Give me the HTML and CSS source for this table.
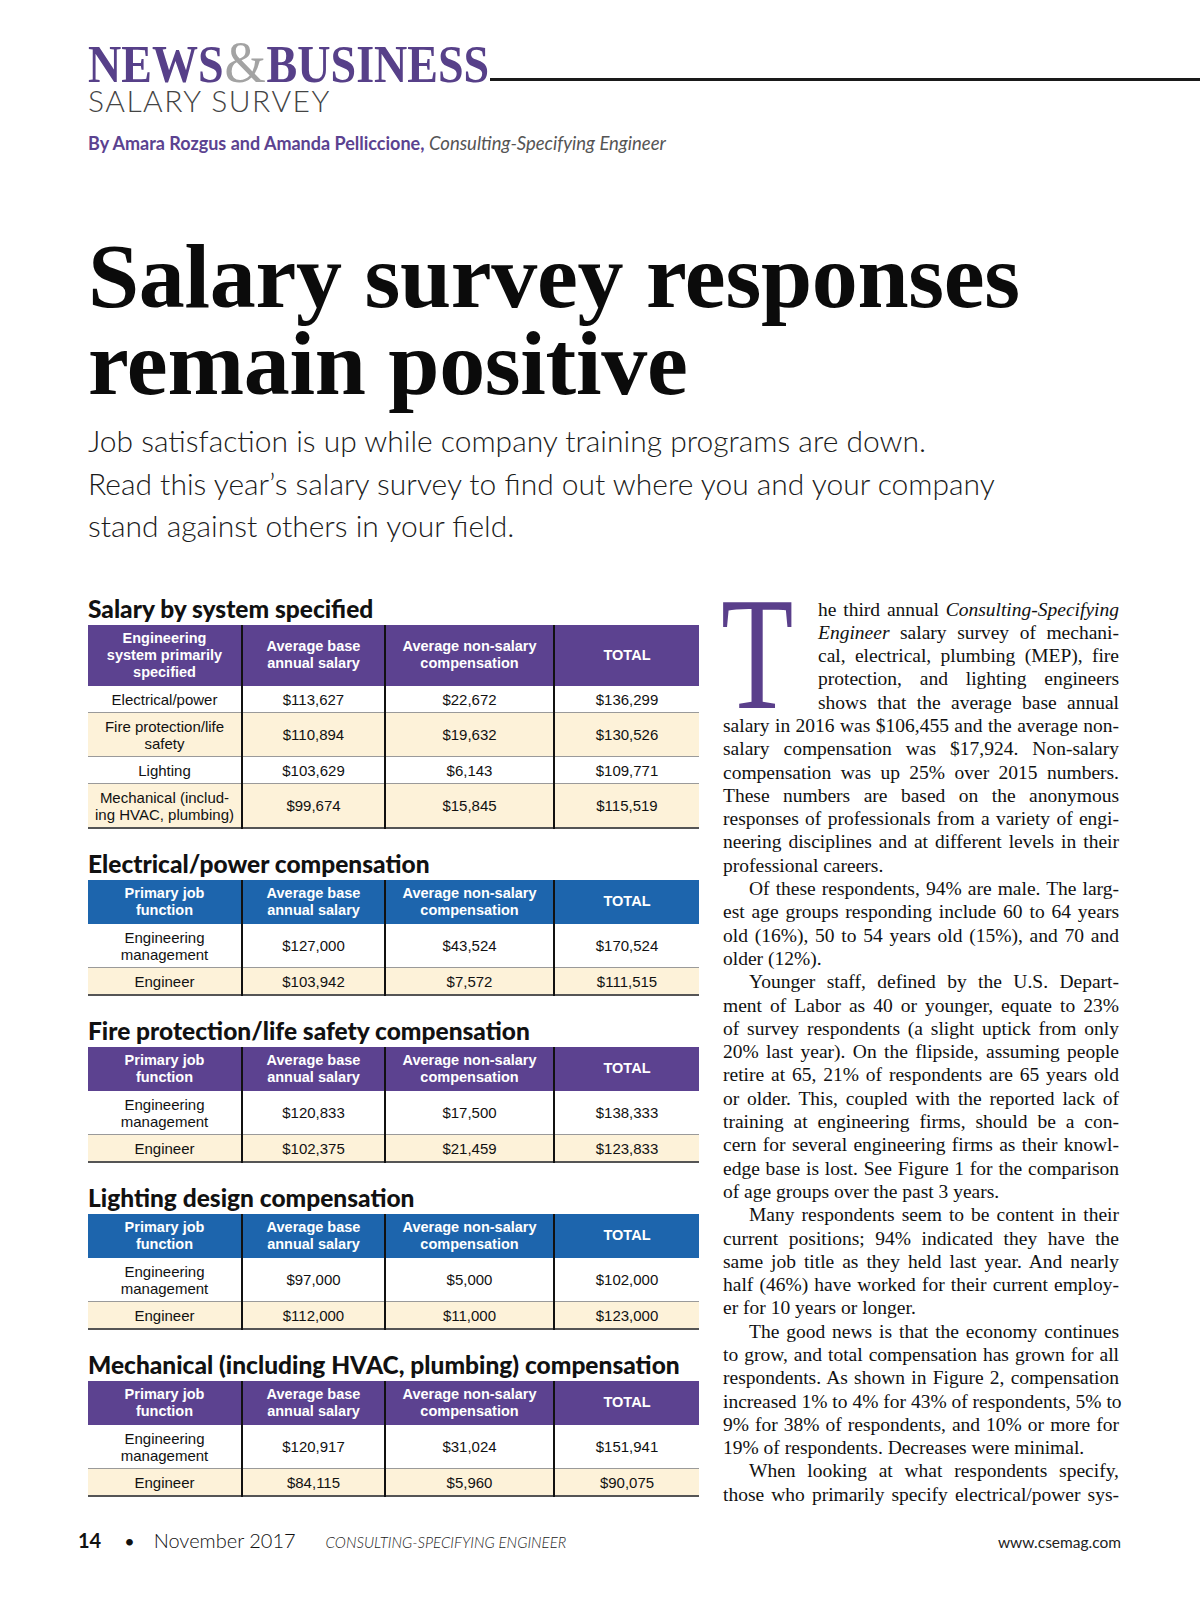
FILE: index.html
```html
<!DOCTYPE html>
<html lang="en">
<head>
<meta charset="utf-8">
<title>Salary survey responses remain positive</title>
<link rel="stylesheet" href="styles.css">
</head>
<body>
<div class="page">
  <header class="top">
    <div class="masthead">
      <div class="mast-word"><span class="mw">NEWS<span class="amp">&amp;</span>BUSINESS</span></div>
      <div class="mast-rule"></div>
    </div>
    <div class="kicker">SALARY SURVEY</div>
    <p class="byline"><b>By Amara Rozgus and Amanda Pelliccione,</b> <i>Consulting-Specifying Engineer</i></p>
  </header>

  <h1 class="headline">Salary survey responses<br>remain positive</h1>
  <p class="dek">Job satisfaction is up while company training programs are down.<br>Read this year’s salary survey to find out where you and your company<br>stand against others in your field.</p>

  <div class="columns">
    <div class="tables">
      <section class="sec">
        <h2 class="sec-title">Salary by system specified</h2>
        <table class="tbl purple">
          <colgroup><col class="c1"><col class="c2"><col class="c3"><col class="c4"></colgroup>
          <thead><tr><th>Engineering<br>system primarily<br>specified</th><th>Average base<br>annual salary</th><th>Average non-salary<br>compensation</th><th>TOTAL</th></tr></thead>
          <tbody>
            <tr><td>Electrical/power</td><td>$113,627</td><td>$22,672</td><td>$136,299</td></tr>
            <tr class="alt"><td>Fire protection/life<br>safety</td><td>$110,894</td><td>$19,632</td><td>$130,526</td></tr>
            <tr><td>Lighting</td><td>$103,629</td><td>$6,143</td><td>$109,771</td></tr>
            <tr class="alt"><td>Mechanical (includ-<br>ing HVAC, plumbing)</td><td>$99,674</td><td>$15,845</td><td>$115,519</td></tr>
          </tbody>
        </table>
      </section>

      <section class="sec">
        <h2 class="sec-title">Electrical/power compensation</h2>
        <table class="tbl blue">
          <colgroup><col class="c1"><col class="c2"><col class="c3"><col class="c4"></colgroup>
          <thead><tr><th>Primary job<br>function</th><th>Average base<br>annual salary</th><th>Average non-salary<br>compensation</th><th>TOTAL</th></tr></thead>
          <tbody>
            <tr><td>Engineering<br>management</td><td>$127,000</td><td>$43,524</td><td>$170,524</td></tr>
            <tr class="alt"><td>Engineer</td><td>$103,942</td><td>$7,572</td><td>$111,515</td></tr>
          </tbody>
        </table>
      </section>

      <section class="sec">
        <h2 class="sec-title">Fire protection/life safety compensation</h2>
        <table class="tbl purple">
          <colgroup><col class="c1"><col class="c2"><col class="c3"><col class="c4"></colgroup>
          <thead><tr><th>Primary job<br>function</th><th>Average base<br>annual salary</th><th>Average non-salary<br>compensation</th><th>TOTAL</th></tr></thead>
          <tbody>
            <tr><td>Engineering<br>management</td><td>$120,833</td><td>$17,500</td><td>$138,333</td></tr>
            <tr class="alt"><td>Engineer</td><td>$102,375</td><td>$21,459</td><td>$123,833</td></tr>
          </tbody>
        </table>
      </section>

      <section class="sec">
        <h2 class="sec-title">Lighting design compensation</h2>
        <table class="tbl blue">
          <colgroup><col class="c1"><col class="c2"><col class="c3"><col class="c4"></colgroup>
          <thead><tr><th>Primary job<br>function</th><th>Average base<br>annual salary</th><th>Average non-salary<br>compensation</th><th>TOTAL</th></tr></thead>
          <tbody>
            <tr><td>Engineering<br>management</td><td>$97,000</td><td>$5,000</td><td>$102,000</td></tr>
            <tr class="alt"><td>Engineer</td><td>$112,000</td><td>$11,000</td><td>$123,000</td></tr>
          </tbody>
        </table>
      </section>

      <section class="sec">
        <h2 class="sec-title">Mechanical (including HVAC, plumbing) compensation</h2>
        <table class="tbl purple">
          <colgroup><col class="c1"><col class="c2"><col class="c3"><col class="c4"></colgroup>
          <thead><tr><th>Primary job<br>function</th><th>Average base<br>annual salary</th><th>Average non-salary<br>compensation</th><th>TOTAL</th></tr></thead>
          <tbody>
            <tr><td>Engineering<br>management</td><td>$120,917</td><td>$31,024</td><td>$151,941</td></tr>
            <tr class="alt"><td>Engineer</td><td>$84,115</td><td>$5,960</td><td>$90,075</td></tr>
          </tbody>
        </table>
      </section>
    </div>

    <article class="story">
      <div class="dropcap"><span class="dc">T</span></div>
      <span class="ln">he third annual <i>Consulting-Specifying</i></span>
      <span class="ln"><i>Engineer</i> salary survey of mechani-</span>
      <span class="ln">cal, electrical, plumbing (MEP), fire</span>
      <span class="ln">protection, and lighting engineers</span>
      <span class="ln">shows that the average base annual</span>
      <span class="ln">salary in 2016 was $106,455 and the average non-</span>
      <span class="ln">salary compensation was $17,924. Non-salary</span>
      <span class="ln">compensation was up 25% over 2015 numbers.</span>
      <span class="ln">These numbers are based on the anonymous</span>
      <span class="ln">responses of professionals from a variety of engi-</span>
      <span class="ln">neering disciplines and at different levels in their</span>
      <span class="ln end">professional careers.</span>
      <span class="ln ind">Of these respondents, 94% are male. The larg-</span>
      <span class="ln">est age groups responding include 60 to 64 years</span>
      <span class="ln">old (16%), 50 to 54 years old (15%), and 70 and</span>
      <span class="ln end">older (12%).</span>
      <span class="ln ind">Younger staff, defined by the U.S. Depart-</span>
      <span class="ln">ment of Labor as 40 or younger, equate to 23%</span>
      <span class="ln">of survey respondents (a slight uptick from only</span>
      <span class="ln">20% last year). On the flipside, assuming people</span>
      <span class="ln">retire at 65, 21% of respondents are 65 years old</span>
      <span class="ln">or older. This, coupled with the reported lack of</span>
      <span class="ln">training at engineering firms, should be a con-</span>
      <span class="ln">cern for several engineering firms as their knowl-</span>
      <span class="ln">edge base is lost. See Figure 1 for the comparison</span>
      <span class="ln end">of age groups over the past 3 years.</span>
      <span class="ln ind">Many respondents seem to be content in their</span>
      <span class="ln">current positions; 94% indicated they have the</span>
      <span class="ln">same job title as they held last year. And nearly</span>
      <span class="ln">half (46%) have worked for their current employ-</span>
      <span class="ln end">er for 10 years or longer.</span>
      <span class="ln ind">The good news is that the economy continues</span>
      <span class="ln">to grow, and total compensation has grown for all</span>
      <span class="ln">respondents. As shown in Figure 2, compensation</span>
      <span class="ln">increased 1% to 4% for 43% of respondents, 5% to</span>
      <span class="ln">9% for 38% of respondents, and 10% or more for</span>
      <span class="ln end">19% of respondents. Decreases were minimal.</span>
      <span class="ln ind">When looking at what respondents specify,</span>
      <span class="ln">those who primarily specify electrical/power sys-</span>
    </article>
  </div>

  <footer class="foot">
    <span class="folio">14</span>
    <span class="dot">•</span>
    <span class="date">November 2017</span>
    <span class="mag">CONSULTING-SPECIFYING ENGINEER</span>
    <span class="url">www.csemag.com</span>
  </footer>
</div>
</body>
</html>
```

FILE: styles.css
```css
* { box-sizing: border-box; }
html, body { margin: 0; padding: 0; background: #fff; }
body { color: #111; }

.page {
  width: 1200px;
  height: 1600px;
  padding: 36px 81px 0 88px;
  overflow: hidden;
}

/* masthead */
.masthead {
  display: flex;
  margin-right: -81px;
}
.mast-word {
  flex: none;
  width: 402px;
  height: 52px;
  line-height: 52px;
  font-family: "Liberation Serif", serif;
  font-weight: 700;
  font-size: 52px;
  color: #574089;
  white-space: nowrap;
}
.mw {
  display: inline-block;
  transform: scaleX(0.885);
  transform-origin: left center;
}
.amp {
  color: #a3a3a3;
  font-weight: 400;
  font-size: 60px;
  margin: 0 1px;
}
.mast-rule {
  flex: 1;
  align-self: flex-end;
  height: 3px;
  margin-bottom: 7px;
  background: #1a1a1a;
}
.kicker {
  font-family: "Lato", sans-serif;
  font-weight: 300;
  font-size: 30px;
  line-height: 30px;
  letter-spacing: 1.5px;
  color: #444;
  margin-top: -3px;
}
.byline {
  margin: 18px 0 0;
  font-family: "Lato", sans-serif;
  font-size: 18px;
  line-height: 20px;
  color: #5b4290;
}
.byline b { font-weight: 700; }
.byline i { color: #555; font-weight: 400; font-size: 18.5px; }

/* headline */
.headline {
  margin: 80px 0 0;
  font-family: "Liberation Serif", serif;
  font-weight: 700;
  font-size: 92px;
  line-height: 87px;
  color: #0b0b0b;
  letter-spacing: -0.3px;
}
.dek {
  margin: 12px 0 0;
  font-family: "Lato", sans-serif;
  font-weight: 300;
  font-size: 30px;
  line-height: 42.5px;
  color: #1b1b1b;
}

/* columns */
.columns {
  display: flex;
  gap: 24px;
  margin-top: 47px;
}
.tables { width: 611px; flex: none; }
.story { width: 396px; flex: none; }

.sec + .sec { margin-top: 20px; }
.sec-title {
  margin: 0 0 1px;
  font-family: "Lato", sans-serif;
  font-weight: 900;
  font-size: 24.5px;
  line-height: 30px;
  color: #111;
}

.tbl {
  width: 611px;
  border-collapse: collapse;
  table-layout: fixed;
  font-family: "Liberation Sans", Arial, sans-serif;
  text-align: center;
  border-bottom: 2px solid #555;
}
.c1 { width: 154px; }
.c2 { width: 143px; }
.c3 { width: 169px; }
.c4 { width: 145px; }

.tbl th {
  font-weight: 700;
  font-size: 14.5px;
  line-height: 17px;
  color: #fff;
  padding: 5px 3px 5px;
  vertical-align: middle;
}
.tbl td {
  font-size: 15px;
  line-height: 17px;
  padding: 5px 3px 4px;
  border-bottom: 1px solid #9a9a9a;
  color: #111;
  vertical-align: middle;
}
.tbl tr:last-child td { border-bottom: none; }
.tbl th + th, .tbl td + td { border-left: 2px solid #111; }
.purple th { background: #5c4290; }
.blue th { background: #1d65ad; }
.tbl .alt td { background: #fdf2d9; }

/* story text */
.story {
  font-family: "Liberation Serif", serif;
  font-size: 19.5px;
  line-height: 23.3px;
  color: #111;
  margin-top: 4px;
}
.ln {
  display: block;
  text-align: justify;
  text-align-last: justify;
  white-space: nowrap;
}
.ln.end { text-align-last: left; }
.ln.ind { text-indent: 26px; }
.dropcap {
  float: left;
  width: 95px;
  height: 116px;
}
.dc {
  display: block;
  font-size: 160px;
  line-height: 112px;
  color: #5a3f8b;
  transform: scaleX(0.74);
  transform-origin: left center;
  margin-left: -2px;
}

/* footer */
.foot {
  display: flex;
  align-items: baseline;
  margin-top: 22px;
  margin-left: -10px;
  font-family: "Lato", sans-serif;
}
.folio { font-weight: 700; font-size: 20px; }
.dot { font-size: 18px; margin-left: 23px; }
.date { font-weight: 300; font-size: 20px; margin-left: 19px; }
.mag { font-style: italic; font-weight: 300; font-size: 15px; margin-left: 30px; color: #222; }
.url { margin-left: auto; font-size: 15.5px; color: #222; margin-right: -2px; }
```
